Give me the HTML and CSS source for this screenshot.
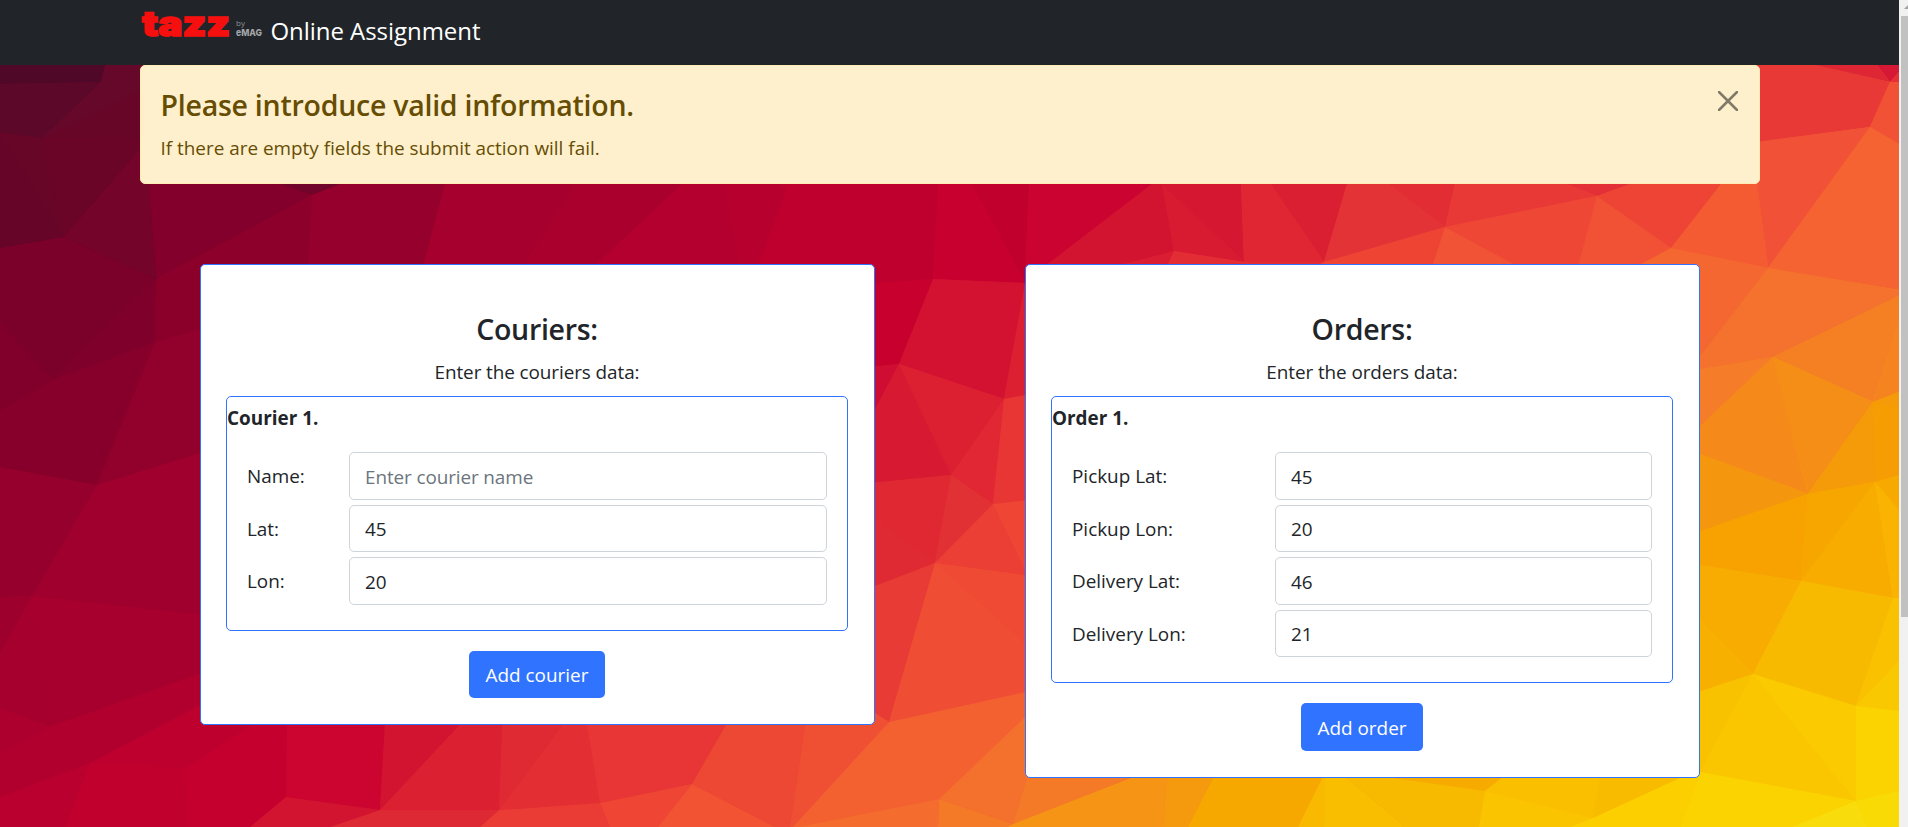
FILE: index.html
```html
<!DOCTYPE html>
<html lang="en">
<head>
<meta charset="utf-8">
<title>Online Assignment</title>
<link rel="stylesheet" href="styles.css">
</head>
<body>
<div class="window">
  <div class="page">
    <svg class="backdrop" viewBox="0 0 1899 827" aria-hidden="true">
      <defs>
        <linearGradient id="heat" gradientUnits="userSpaceOnUse" x1="0" y1="0" x2="1185" y2="1422">
          <stop offset=".03" stop-color="#500828"/>
          <stop offset=".15" stop-color="#7b002a"/>
          <stop offset=".31" stop-color="#ad002e"/>
          <stop offset=".42" stop-color="#c7002e"/>
          <stop offset=".48" stop-color="#d51831"/>
          <stop offset=".56" stop-color="#e93b35"/>
          <stop offset=".66" stop-color="#f15236"/>
          <stop offset=".72" stop-color="#f4712d"/>
          <stop offset=".76" stop-color="#f58a1b"/>
          <stop offset=".82" stop-color="#f7a800"/>
          <stop offset=".9" stop-color="#f9c000"/>
          <stop offset="1" stop-color="#f9dc0c"/>
        </linearGradient>
      </defs>
      <rect width="1899" height="827" fill="url(#heat)"/>
      <!-- dark upper left -->
      <path fill="#680628" d="M0 65H160V290H0z"/>
      <path fill="#500828" d="M0 65H105L101 82L0 84z"/>
      <path fill="#5c0828" d="M0 84L101 82L42 138L0 133z"/>
      <path fill="#650829" d="M101 82L105 65H150V84L42 138z"/>
      <path fill="#680628" d="M0 133L42 138L64 237z"/>
      <path fill="#6a0528" d="M42 138L149 139L64 237z"/>
      <path fill="#660528" d="M0 133L64 237L0 248z"/>
      <path fill="#740429" d="M64 237L149 139V184L156 279z"/>
      <path fill="#7b002a" d="M0 248L64 237L156 279L53 380L0 322z"/>
      <path fill="#80002b" d="M0 322L53 380L0 411z"/>
      <path fill="#82002b" d="M149 184H340L312 195L156 279z"/>
      <path fill="#70042a" d="M281 184H340L312 195z"/>
      <path fill="#8e002c" d="M156 279L312 195L308 270H200V342L155 342z"/>
      <path fill="#7f002b" d="M53 380L156 279L155 342z"/>
      <path fill="#86002b" d="M0 411L53 380L155 342L97 485L0 467z"/>
      <path fill="#92002c" d="M155 342L210 326V450L97 485z"/>
      <path fill="#8b002b" d="M156 279L210 260V326L155 342z"/>
      <path fill="#95002d" d="M0 467L97 485L32 596L0 597z"/>
      <path fill="#9f002d" d="M97 485L210 450V616L32 596z"/>
      <path fill="#a8002e" d="M32 596L210 616V673L50 727z"/>
      <path fill="#9d002d" d="M0 597L32 596L0 653z"/>
      <path fill="#a5002e" d="M0 653L32 596L50 727L0 708z"/>
      <path fill="#ad002e" d="M0 708L50 727L0 755z"/>
      <path fill="#b1002e" d="M50 727L210 670V750L90 763L0 797V755z"/>
      <path fill="#b9002e" d="M0 797L90 763L65 827H0z"/>
      <path fill="#c2002e" d="M90 763L187 768L190 827H65z"/>
      <path fill="#be002e" d="M90 763L210 700H287V725L187 768z"/>
      <path fill="#c6002e" d="M187 768L260 720H287L286 797L190 827z"/>
      <!-- top centre strip -->
      <path fill="#96002c" d="M312 195L340 184H445L422 270H308z"/>
      <path fill="#a5002e" d="M445 184H574L520 270H422z"/>
      <path fill="#a9002e" d="M574 184H682L640 223L590 270H520z"/>
      <path fill="#b3002e" d="M682 184H724L741 270H590L640 223z"/>
      <path fill="#b7002e" d="M724 184H785L787 188L760 270H741z"/>
      <path fill="#bf002e" d="M778 184H938L933 279L870 284V270H757L787 188z"/>
      <path fill="#c8002f" d="M938 184H972L1025 283L933 279z"/>
      <path fill="#c1002d" d="M972 184H1029L1025 283z"/>
      <path fill="#cb0330" d="M1029 184H1152L1040 270H1025z"/>
      <path fill="#d31431" d="M1152 184H1162L1174 251L1117 270H1040z"/>
      <path fill="#da1d32" d="M1174 251V270H1100z"/>
      <path fill="#d91b31" d="M1162 184L1244 262L1174 251z"/>
      <path fill="#d61731" d="M1162 184H1241L1244 262z"/>
      <path fill="#df2632" d="M1241 184H1271L1324 262L1244 262z"/>
      <path fill="#db1f32" d="M1271 184H1347L1324 262z"/>
      <path fill="#e43336" d="M1347 184H1389L1445 227L1324 262z"/>
      <path fill="#e22d34" d="M1389 184H1455L1445 227z"/>
      <path fill="#e93936" d="M1455 184H1567L1597 196L1445 227z"/>
      <path fill="#e32f36" d="M1567 184H1630L1597 196z"/>
      <path fill="#e32d35" d="M1174 251L1244 262L1324 262V270H1165z"/>
      <path fill="#ed4434" d="M1324 262L1445 227L1431 270H1310z"/>
      <path fill="#f15336" d="M1445 227L1525 270H1431z"/>
      <path fill="#ef4735" d="M1445 227L1597 196L1578 270H1525z"/>
      <path fill="#f15236" d="M1597 196L1671 248L1630 270H1577z"/>
      <path fill="#ee4435" d="M1597 196L1630 184H1721L1671 248z"/>
      <!-- gap between the two cards -->
      <path fill="#c7002e" d="M870 284L933 279L899 364L870 367z"/>
      <path fill="#d31231" d="M933 279L1025 283L1004 399L899 364z"/>
      <path fill="#dc2032" d="M1025 283L1030 270V395L1004 399z"/>
      <path fill="#cf0c31" d="M870 367L899 364L870 419z"/>
      <path fill="#db1e32" d="M870 419L899 364L1004 399L951 475L870 483z"/>
      <path fill="#d81932" d="M899 364L951 475L870 483V419z"/>
      <path fill="#dc2032" d="M899 364L1004 399L951 475z"/>
      <path fill="#e02733" d="M951 475L1004 399L993 504z"/>
      <path fill="#e83635" d="M1004 399L1030 394V500L993 504z"/>
      <path fill="#e02833" d="M870 483L951 475L935 563L870 516z"/>
      <path fill="#e23134" d="M951 475L993 504L935 563z"/>
      <path fill="#df2933" d="M870 516L935 563L870 588z"/>
      <path fill="#eb3f35" d="M935 563L993 504L1030 576z"/>
      <path fill="#ee4535" d="M993 504L1030 500V580z"/>
      <path fill="#e93b35" d="M870 588L935 563L889 722L870 710z"/>
      <path fill="#ef4e35" d="M935 563L1030 576V691L889 722z"/>
      <path fill="#ef4a34" d="M935 563L1030 576V648z"/>
      <!-- lower strip -->
      <path fill="#cb052f" d="M287 720H385L380 810L286 797z"/>
      <path fill="#d31431" d="M385 720H464L380 810z"/>
      <path fill="#d21431" d="M286 797L380 810L330 827H190z"/>
      <path fill="#c6002e" d="M187 768L286 797L250 827H190z"/>
      <path fill="#db2032" d="M464 720H502L499 810L380 810z"/>
      <path fill="#df2a33" d="M502 720H566L499 810z"/>
      <path fill="#dd2933" d="M380 810L499 810L480 827H330z"/>
      <path fill="#e32f34" d="M566 720H586L600 803L499 810z"/>
      <path fill="#e73635" d="M586 720H729L692 784L600 803z"/>
      <path fill="#ea3c35" d="M499 810L600 803L610 827H480z"/>
      <path fill="#ee4535" d="M600 803L692 784L658 827H610z"/>
      <path fill="#f25433" d="M692 784L775 827H658z"/>
      <path fill="#ed4834" d="M692 784L729 720H806L790 827H775z"/>
      <path fill="#ef5034" d="M806 720H870V710L889 722L795 827H790z"/>
      <path fill="#f46130" d="M889 722L1030 691V712L939 799L800 827H793z"/>
      <path fill="#f4712d" d="M939 799L1030 712V777L1013 824z"/>
      <path fill="#f46d2e" d="M939 799L938 827H798z"/>
      <path fill="#f47a28" d="M939 799L1013 824L1010 827H938z"/>
      <path fill="#f57a28" d="M1030 770H1150L1013 824z"/>
      <path fill="#f59415" d="M1133 777L1150 770H1167L1163 827H1008L1013 824z"/>
      <path fill="#f5990f" d="M1167 770H1217L1188 827H1163z"/>
      <path fill="#f7a800" d="M1217 770H1326L1298 827H1188z"/>
      <path fill="#f8b900" d="M1326 770L1324 827H1298z"/>
      <path fill="#f9be00" d="M1325 770H1338L1405 827H1324z"/>
      <path fill="#f8ba00" d="M1338 770L1387 777L1485 791L1479 827H1405z"/>
      <path fill="#f7ab00" d="M1338 770H1503V777L1485 791L1387 777z"/>
      <path fill="#f9bb00" d="M1503 777V770H1700L1593 818L1485 791z"/>
      <path fill="#fac500" d="M1485 791L1593 818L1570 827H1479z"/>
      <path fill="#fac000" d="M1503 777H1600L1593 818L1485 791z"/>
      <path fill="#fbcf00" d="M1593 818L1682 777L1700 772L1680 827H1570z"/>
      <!-- right side -->
      <path fill="#e83936" d="M1755 65H1815L1890 82L1870 127L1760 142H1755z"/>
      <path fill="#df2635" d="M1815 65H1877L1890 82z"/>
      <path fill="#d61835" d="M1877 65H1899V72L1890 82z"/>
      <path fill="#e63036" d="M1890 82L1899 72V82z"/>
      <path fill="#f15135" d="M1890 82H1899V144L1870 127z"/>
      <path fill="#f15136" d="M1755 142L1870 127L1768 268L1757 184z"/>
      <path fill="#f45b32" d="M1721 184H1757L1768 268L1671 248z"/>
      <path fill="#f56332" d="M1870 127L1899 144V290L1768 268z"/>
      <path fill="#f46730" d="M1671 248L1768 268L1695 363V270H1630z"/>
      <path fill="#f4712e" d="M1768 268L1899 290V296L1773 357L1695 370V363z"/>
      <path fill="#f58024" d="M1773 357L1899 296V324L1873 402z"/>
      <path fill="#f58420" d="M1899 324V392L1873 402z"/>
      <path fill="#f57c28" d="M1695 370L1773 357L1695 431z"/>
      <path fill="#f58a1b" d="M1695 431L1773 357L1808 494L1695 452z"/>
      <path fill="#f58e17" d="M1773 357L1873 402L1808 494z"/>
      <path fill="#f5960f" d="M1695 452L1808 494L1695 533z"/>
      <path fill="#f59b09" d="M1873 402L1899 392V475L1875 482L1808 494z"/>
      <path fill="#f69d04" d="M1873 402L1899 408V475L1875 482z"/>
      <path fill="#f7a200" d="M1695 533L1808 494L1801 581L1695 564z"/>
      <path fill="#f7a600" d="M1808 494L1875 482L1801 581z"/>
      <path fill="#f8ac00" d="M1875 482L1893 598L1801 581z"/>
      <path fill="#f7a900" d="M1875 482L1899 475V510z"/>
      <path fill="#f9b300" d="M1875 482L1899 510V598H1893z"/>
      <path fill="#f8ab00" d="M1695 564L1801 581L1753 674L1695 614z"/>
      <path fill="#f8b000" d="M1695 614L1753 674L1695 693z"/>
      <path fill="#f8ba00" d="M1801 581L1893 598L1856 706L1753 674z"/>
      <path fill="#f9c100" d="M1893 598H1899V661L1856 706z"/>
      <path fill="#f9c200" d="M1695 693L1753 674L1700 772H1695z"/>
      <path fill="#fbca00" d="M1753 674L1856 706V801L1700 772z"/>
      <path fill="#fac600" d="M1753 674L1856 801L1700 772z"/>
      <path fill="#fac800" d="M1856 706L1899 661V711z"/>
      <path fill="#fbd300" d="M1856 706L1899 711V791L1856 801z"/>
      <path fill="#fbd300" d="M1700 772L1856 801L1792 827H1680z"/>
      <path fill="#f9da05" d="M1856 801L1899 791V827H1867z"/>
      <path fill="#f9dc0c" d="M1856 801L1867 827H1792z"/>
    </svg>

    <nav class="navbar">
      <div class="container navbar-row">
        <svg class="logo" viewBox="0 0 122 36" role="img" aria-label="tazz by eMAG">
          <text class="logo-name" x="2" y="26" textLength="88" lengthAdjust="spacingAndGlyphs">tazz</text>
          <text class="logo-by" x="96" y="16">by</text>
          <text class="logo-parent" x="96" y="25.5" textLength="26" lengthAdjust="spacingAndGlyphs">eMAG</text>
        </svg>
        <a class="brand">Online Assignment</a>
      </div>
    </nav>

    <main class="container">
      <div class="alert">
        <div>
          <h4 class="alert-title">Please introduce valid information.</h4>
          <p class="alert-text">If there are empty fields the submit action will fail.</p>
        </div>
        <svg class="close" viewBox="0 0 16 16" role="img" aria-label="Close"><path d="M.8.8 15.2 15.2M15.2.8.8 15.2"/></svg>
      </div>

      <div class="panels">
        <section class="panel">
          <h4 class="panel-title">Couriers:</h4>
          <p class="panel-text">Enter the couriers data:</p>
          <div class="entry entry-courier">
            <b class="entry-title">Courier 1.</b>
            <div class="fields">
              <label for="name">Name:</label><input id="name" placeholder="Enter courier name">
              <label for="lat">Lat:</label><input id="lat" value="45">
              <label for="lon">Lon:</label><input id="lon" value="20">
            </div>
          </div>
          <button class="btn btn-courier">Add courier</button>
        </section>

        <section class="panel">
          <h4 class="panel-title">Orders:</h4>
          <p class="panel-text">Enter the orders data:</p>
          <div class="entry entry-order">
            <b class="entry-title">Order 1.</b>
            <div class="fields">
              <label for="plat">Pickup Lat:</label><input id="plat" value="45">
              <label for="plon">Pickup Lon:</label><input id="plon" value="20">
              <label for="dlat">Delivery Lat:</label><input id="dlat" value="46">
              <label for="dlon">Delivery Lon:</label><input id="dlon" value="21">
            </div>
          </div>
          <button class="btn btn-order">Add order</button>
        </section>
      </div>
    </main>
  </div>
  <div class="scrollbar">
    <svg class="scroll-arrow" viewBox="0 0 9 16"><path d="M5 9H9V5z"/></svg>
    <div class="scroll-thumb"></div>
  </div>
</div>
</body>
</html>
```

FILE: styles.css
```css
* { box-sizing: border-box; }
body {
  margin: 0;
  font-family: "Open Sans", "Noto Sans", sans-serif;
  font-size: 18.9px;
  line-height: 30px;
  color: #212529;
}
h4, p { margin: 0; }

.window {
  display: grid;
  grid-template-columns: minmax(0, 1fr) 9px;
  height: 827px;
  overflow: hidden;
}
.page { position: relative; overflow: hidden; }
.backdrop { position: absolute; inset: 0; width: 1899px; height: 827px; z-index: -1; }
.container { width: 1620px; margin: 0 auto; }

.navbar { height: 65px; background: #212529; }
.navbar-row { display: flex; align-items: flex-start; gap: 9px; padding-top: 10px; }
.logo { width: 122px; height: 36px; overflow: visible; }
.logo-name { font: 900 34px Inter, sans-serif; fill: #f60f0f; stroke: #f60f0f; stroke-width: 1.6px; }
.logo-by { font: 8px "Open Sans", sans-serif; fill: #8d8f91; }
.logo-parent { font: 800 9.5px Inter, sans-serif; fill: #a2a4a6; }
.brand { color: #fff; font-size: 24px; line-height: 42px; letter-spacing: -0.05px; white-space: nowrap; }

.alert {
  display: flex;
  justify-content: space-between;
  height: 119px;
  padding: 21px 21px 0 20px;
  border: 1px solid #ffecb5;
  border-radius: 5px;
  background: #fff0cd;
  color: #664d03;
}
.alert-title { font-size: 28.5px; line-height: 36px; font-weight: 600; letter-spacing: -0.25px; margin-bottom: 10px; }
.close { width: 20px; height: 20px; margin-top: 4px; }
.close path { stroke: #807967; stroke-width: 2; stroke-linecap: round; fill: none; }

.panels { display: flex; justify-content: space-between; align-items: flex-start; padding: 80px 60px 0; }
.panel {
  width: 675px;
  display: flex;
  flex-direction: column;
  align-items: center;
  padding: 46px 25px 26px;
  border: 1px solid #2f73ff;
  border-radius: 5px;
  background: #fff;
}
.panel-title { font-size: 28.5px; line-height: 36px; font-weight: 600; letter-spacing: -0.3px; }
.panel-text { margin: 10px 0 9px; letter-spacing: -0.08px; }
.entry { width: 622px; padding-bottom: 25px; border: 1px solid #2f73ff; border-radius: 5px; }
.entry-title { display: block; margin: 6px 0 19px; font-weight: 700; }
.fields { display: grid; column-gap: 0; row-gap: 5px; padding: 0 20px; align-items: center; }
.fields label { padding-top: 1px; }
.entry-courier .fields { grid-template-columns: 102px 478px; }
.entry-order .fields { grid-template-columns: 203px 377px; }
input {
  width: 100%;
  height: 47.5px;
  padding: 2px 15px 0;
  border: 1px solid #ced4da;
  border-radius: 5px;
  font: inherit;
  color: inherit;
  background: #fff;
}
input::placeholder { color: #6c757d; opacity: 1; letter-spacing: -0.1px; }
.btn {
  height: 47.5px;
  margin-top: 20px;
  padding: 2px 0 0;
  border: 0;
  border-radius: 5px;
  background: #2f73ff;
  color: #fff;
  font: inherit;
}
.btn-courier { width: 136px; }
.btn-order { width: 122px; }

.scrollbar { background: #f1f1f1; }
.scroll-arrow { display: block; width: 9px; height: 16px; fill: #a3a3a3; }
.scroll-thumb { height: 601px; margin-left: 2px; background: #c1c1c1; }
```
